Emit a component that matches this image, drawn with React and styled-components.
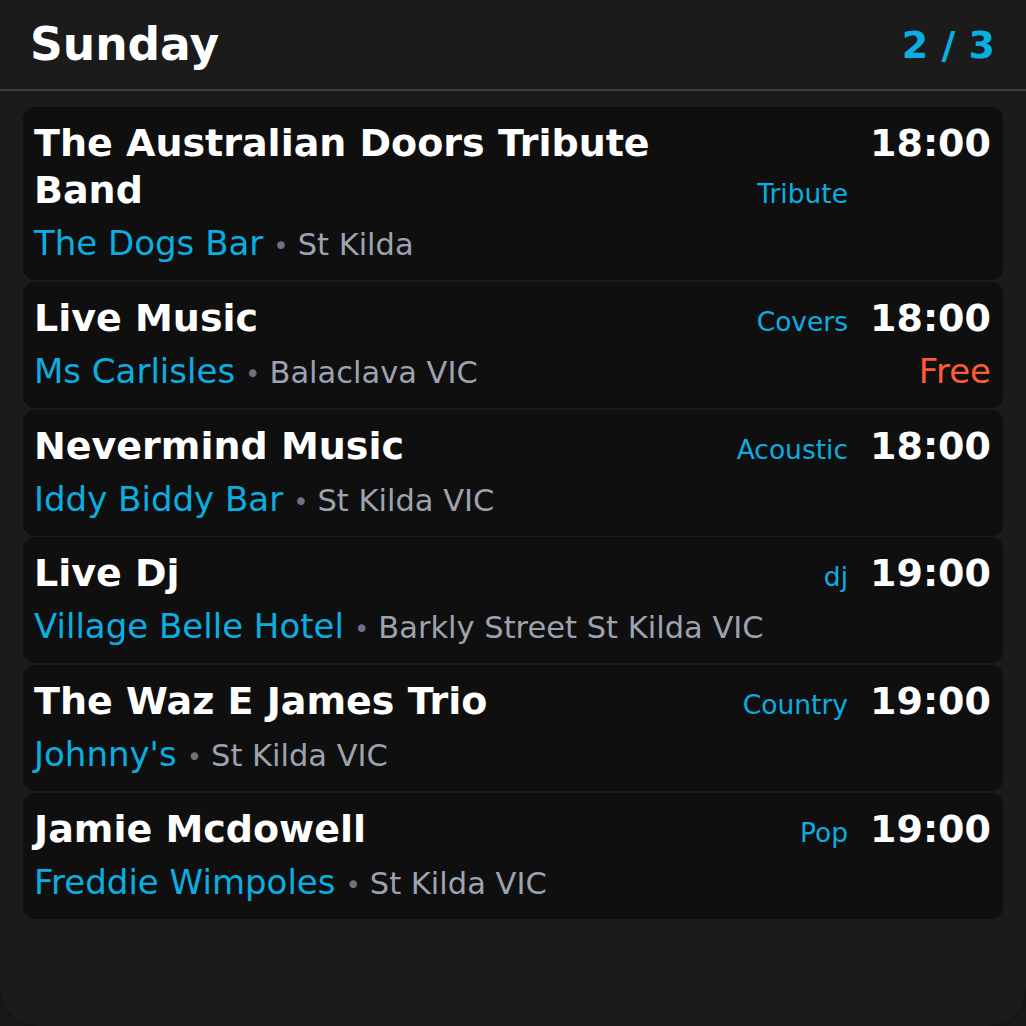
import React from "react";
import styled, { createGlobalStyle } from "styled-components";

const GlobalStyle = createGlobalStyle`
  html, body {
    margin: 0;
    padding: 0;
    background: #181818;
  }
  * {
    box-sizing: border-box;
  }
`;

const events = [
  {
    title: "The Australian Doors Tribute Band",
    genre: "Tribute",
    time: "18:00",
    venue: "The Dogs Bar",
    location: "St Kilda",
  },
  {
    title: "Live Music",
    genre: "Covers",
    time: "18:00",
    venue: "Ms Carlisles",
    location: "Balaclava VIC",
    price: "Free",
  },
  {
    title: "Nevermind Music",
    genre: "Acoustic",
    time: "18:00",
    venue: "Iddy Biddy Bar",
    location: "St Kilda VIC",
  },
  {
    title: "Live Dj",
    genre: "dj",
    time: "19:00",
    venue: "Village Belle Hotel",
    location: "Barkly Street St Kilda VIC",
  },
  {
    title: "The Waz E James Trio",
    genre: "Country",
    time: "19:00",
    venue: "Johnny's",
    location: "St Kilda VIC",
  },
  {
    title: "Jamie Mcdowell",
    genre: "Pop",
    time: "19:00",
    venue: "Freddie Wimpoles",
    location: "St Kilda VIC",
  },
];

const Screen = styled.div`
  width: 1026px;
  height: 1026px;
  background: #1b1b1b;
  border-radius: 0 0 38px 38px;
  box-shadow: 0 0 6px rgba(0, 0, 0, 0.25);
  font-family: "DejaVu Sans", "Liberation Sans", sans-serif;
  overflow: hidden;
`;

const Header = styled.header`
  display: flex;
  justify-content: space-between;
  align-items: center;
  height: 91px;
  padding: 0 31px 0 30px;
  border-bottom: 2px solid #383d47;
`;

const Day = styled.h1`
  margin: 0;
  font-size: 45.5px;
  font-weight: 700;
  color: #ffffff;
`;

const Count = styled.span`
  font-size: 38px;
  font-weight: 700;
  color: #0aaee0;
`;

const List = styled.div`
  display: flex;
  flex-direction: column;
  gap: 1.75px;
  padding: 16px 23px 0 23px;
`;

const Card = styled.div`
  display: flex;
  gap: 22px;
  padding: 13px 12px 14px 11px;
  background: #0f0f0f;
  border-radius: 12px;
`;

const Main = styled.div`
  flex: 1;
  min-width: 0;
`;

const TitleRow = styled.div`
  display: flex;
  align-items: flex-end;
  gap: 16px;
`;

const Title = styled.div`
  flex: 1;
  font-size: 38px;
  font-weight: 700;
  line-height: 47px;
  color: #ffffff;
`;

const Genre = styled.span`
  flex-shrink: 0;
  font-size: 26.5px;
  line-height: 40px;
  color: #0aaee0;
`;

const VenueRow = styled.div`
  display: flex;
  align-items: baseline;
  margin-top: 7px;
  white-space: nowrap;
`;

const Venue = styled.span`
  font-size: 34px;
  line-height: 44px;
  color: #0aaee0;
`;

const Dot = styled.span`
  margin: 0 9px 0 10px;
  font-size: 26px;
  line-height: 40px;
  color: #6b7280;
`;

const Location = styled.span`
  font-size: 30.5px;
  line-height: 40px;
  color: #9ca3af;
`;

const Side = styled.div`
  display: flex;
  flex-direction: column;
  align-items: flex-end;
`;

const Time = styled.div`
  font-size: 38px;
  font-weight: 700;
  line-height: 47px;
  color: #ffffff;
`;

const Price = styled.div`
  margin-top: 7px;
  font-size: 34px;
  line-height: 44px;
  color: #ff5b36;
`;

function EventCard({ event }) {
  return (
    <Card>
      <Main>
        <TitleRow>
          <Title>{event.title}</Title>
          <Genre>{event.genre}</Genre>
        </TitleRow>
        <VenueRow>
          <Venue>{event.venue}</Venue>
          <Dot>•</Dot>
          <Location>{event.location}</Location>
        </VenueRow>
      </Main>
      <Side>
        <Time>{event.time}</Time>
        {event.price && <Price>{event.price}</Price>}
      </Side>
    </Card>
  );
}

export default function App() {
  return (
    <>
      <GlobalStyle />
      <Screen>
        <Header>
          <Day>Sunday</Day>
          <Count>2 / 3</Count>
        </Header>
        <List>
          {events.map((event) => (
            <EventCard key={event.title} event={event} />
          ))}
        </List>
      </Screen>
    </>
  );
}
